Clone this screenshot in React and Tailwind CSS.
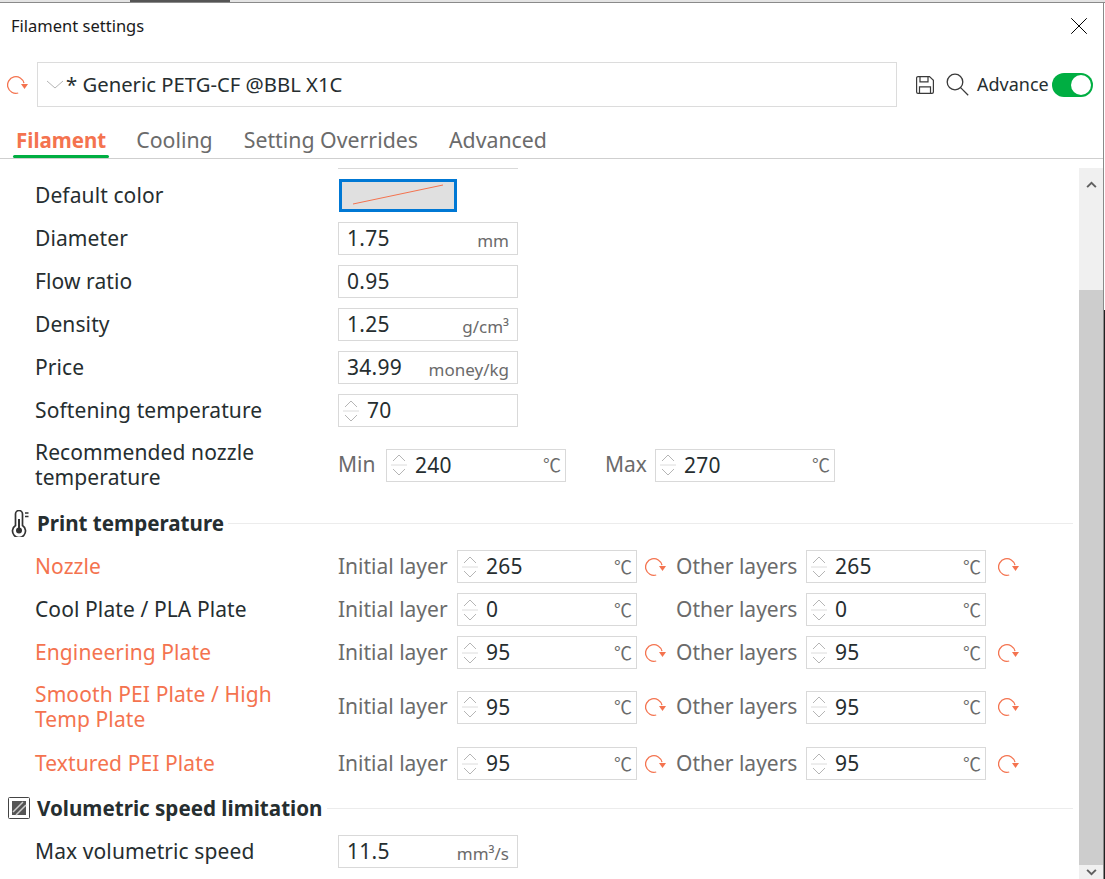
import { X } from 'lucide-react'

const FONT = "font-['Noto_Sans',sans-serif]"

function Undo({ className = '' }) {
  return (
    <svg viewBox="0 0 21 18" className={`w-[21px] h-[18px] shrink-0 ${className}`} fill="none">
      <path d="M17 7.2A8.3 8.3 0 1 0 11.2 17" stroke="#f4734f" strokeWidth="1.3" />
      <path d="M14 8h7l-3.5 5z" fill="#f4734f" />
    </svg>
  )
}

function Spin() {
  return (
    <svg viewBox="0 0 18 30" className="w-[18px] h-[30px] shrink-0" fill="none" stroke="#b5b5b5" strokeWidth="1">
      <path d="M3 11l6-6 6 6M3 19l6 6 6-6" />
      <path d="M1 15h16" stroke="#dcdcdc" />
    </svg>
  )
}

function TextBox({ value, unit, spin, w = 'w-[180px]' }) {
  const isTemp = unit === '℃'
  return (
    <div className={`${w} h-[33px] shrink-0 border border-[#d9d9d9] flex items-center pl-[3px] ${isTemp ? 'pr-[4px]' : 'pr-2'}`}>
      {spin ? <Spin /> : <span className="w-[5px]" />}
      <span className={`${spin ? 'ml-[7px]' : ''} text-[21px] text-[#262e30] leading-none tracking-[0.3px]`}>{value}</span>
      {unit && (
        <span className={`ml-auto leading-none text-[#6b6b6b] ${isTemp ? "text-[18px] pb-[2px] font-['Noto_Sans_CJK_SC',sans-serif]" : 'text-[17px] pt-1'}`}>
          {unit}
        </span>
      )}
    </div>
  )
}

function Row({ label, modified, h = 'h-[33px]', children, mb = 'mb-[10px]' }) {
  return (
    <div className={`flex items-center ${h} ${mb}`}>
      <div className={`w-[303px] shrink-0 pr-[30px] text-[21px] leading-[25px] tracking-[0.1px] ${modified ? 'text-[#f4734f]' : 'text-[#262e30]'}`}>{label}</div>
      {children}
    </div>
  )
}

function TempRow({ label, a, b, h, mb, modified = true }) {
  return (
    <Row label={label} modified={modified} h={h} mb={mb}>
      <span className="w-[119px] shrink-0 text-[21px] text-[#6b6b6b]">Initial layer</span>
      <TextBox value={a} unit="℃" spin />
      <span className="w-[39px] shrink-0 flex pl-[8px]">{modified && <Undo />}</span>
      <span className="w-[130px] shrink-0 text-[21px] text-[#6b6b6b]">Other layers</span>
      <TextBox value={b} unit="℃" spin />
      <span className="w-[43px] shrink-0 flex pl-[12px]">{modified && <Undo />}</span>
    </Row>
  )
}

function Section({ icon, title, mb }) {
  return (
    <div className={`flex items-center h-[30px] -ml-[28px] ${mb}`}>
      <span className="w-[30px] shrink-0 flex items-center">{icon}</span>
      <span className="text-[20.6px] font-bold text-[#262e30] whitespace-nowrap">{title}</span>
      <span className="flex-1 h-px bg-[#ececec] ml-1" />
    </div>
  )
}

export default function App() {
  return (
    <div className={`w-[1105px] h-[879px] overflow-hidden bg-white flex flex-col ${FONT}`}>
      {/* what shows behind the window */}
      <div className="h-[2px] shrink-0 flex">
        <div className="w-[130px] bg-[#e4e4e4]" />
        <div className="w-[100px] bg-[#555]" />
        <div className="flex-1 bg-[#e4e4e4]" />
      </div>
      <div className="h-px shrink-0 bg-[#8a8a8a]" />

      <div className="flex-1 min-h-0 flex">
        <div className="flex-1 min-w-0 bg-white flex flex-col">
          {/* Title */}
          <div className="h-[46px] shrink-0 flex items-center justify-between pl-[11px] pr-[9px]">
            <span className="text-[16.5px] text-[#1a1a1a]">Filament settings</span>
            <X className="w-[30px] h-[30px] text-black" strokeWidth={0.8} />
          </div>

          {/* Preset bar */}
          <div className="h-[45px] shrink-0 mt-[13px] flex items-center pl-[7px]">
            <Undo />
            <div className="ml-[9px] w-[860px] h-[45px] border border-[#dcdcdc] flex items-center pl-2">
              <svg viewBox="0 0 18 10" className="w-[18px] h-[10px]" fill="none" stroke="#b5b5b5"><path d="M1 1l8 7 8-7" /></svg>
              <span className="ml-[2px] text-[20.3px] text-[#262e30]">* Generic PETG-CF @BBL X1C</span>
            </div>
            <svg viewBox="0 0 18 18" className="ml-[19px] w-[18px] h-[18px]" fill="none" stroke="#3a3a3a" strokeWidth="1.2">
              <path d="M.6 2A1.4 1.4 0 0 1 2 .6h11.5l3.9 3.6V16a1.4 1.4 0 0 1-1.4 1.4H2A1.4 1.4 0 0 1 .6 16z" />
              <path d="M4 .8v5h8v-5M3.5 17v-6.2h11V17" />
            </svg>
            <svg viewBox="0 0 23 23" className="ml-[12px] w-[23px] h-[23px]" fill="none" stroke="#3a3a3a" strokeWidth="1.3">
              <circle cx="9" cy="9" r="7.8" />
              <path d="M14.6 14.6l7.6 7.6" />
            </svg>
            <span className="ml-[8px] text-[18px] text-[#262e30]">Advance</span>
            <span className="ml-[3px] w-[41px] h-[24px] rounded-full bg-[#00ae42] flex items-center justify-end pr-[2px]">
              <span className="w-[20px] h-[20px] rounded-full bg-white" />
            </span>
          </div>

          {/* Tabs */}
          <div className="h-[52px] shrink-0 border-b border-[#cfcfcf] flex items-end pl-[16px] text-[21.3px] text-[#6b6b6b]">
            <span className="relative font-bold text-[20.5px] text-[#f4734f] h-[42px] leading-[48px]">
              Filament
              <span className="absolute left-[-3px] right-[-3px] bottom-0 h-[3px] rounded-full bg-[#00ae42]" />
            </span>
            <span className="ml-[30px] h-[42px] leading-[48px]">Cooling</span>
            <span className="ml-[31px] h-[42px] leading-[48px]">Setting Overrides</span>
            <span className="ml-[31px] h-[42px] leading-[48px]">Advanced</span>
          </div>

          {/* Body */}
          <div className="flex-1 min-h-0 flex">
            <div className="flex-1 min-w-0 pl-[35px] pr-[6px] pt-[9px] overflow-hidden">
              <div className="ml-[303px] w-[180px] h-px bg-[#d9d9d9] mb-[10px]" />
              <Row label="Default color">
                <div className="ml-px w-[118px] h-[33px] border-[3px] border-[#0078d4] bg-[#e0e0e0]">
                  <svg viewBox="0 0 112 27" className="w-[112px] h-[27px]"><path d="M11 22L101 3" stroke="#f4734f" strokeWidth="1" /></svg>
                </div>
              </Row>
              <Row label="Diameter"><TextBox value="1.75" unit="mm" /></Row>
              <Row label="Flow ratio"><TextBox value="0.95" /></Row>
              <Row label="Density"><TextBox value="1.25" unit="g/cm³" /></Row>
              <Row label="Price"><TextBox value="34.99" unit="money/kg" /></Row>
              <Row label="Softening temperature"><TextBox value="70" spin /></Row>
              <Row label="Recommended nozzle temperature" h="h-[56px]" mb="mb-[15px]">
                <span className="w-[48px] shrink-0 text-[21px] text-[#6b6b6b]">Min</span>
                <TextBox value="240" unit="℃" spin />
                <span className="ml-[39px] w-[50px] shrink-0 text-[21px] text-[#6b6b6b]">Max</span>
                <TextBox value="270" unit="℃" spin />
              </Row>

              <Section
                title="Print temperature"
                mb="mb-[12px]"
                icon={
                  <svg viewBox="0 0 18 27" className="ml-[4px] w-[18px] h-[27px]" fill="none" stroke="#333" strokeWidth="1.7">
                    <path d="M4.5 4a3.5 3.5 0 0 1 7 0v11.5a6.5 6.5 0 1 1-7 0z" />
                    <circle cx="8" cy="20.5" r="3" fill="#333" stroke="none" />
                    <path d="M8 9v10" strokeWidth="2" />
                    <path d="M14 3h3.5M14 6.5h3.5" strokeWidth="1.4" />
                  </svg>
                }
              />
              <TempRow label="Nozzle" a="265" b="265" />
              <TempRow label="Cool Plate / PLA Plate" a="0" b="0" modified={false} />
              <TempRow label="Engineering Plate" a="95" b="95" />
              <TempRow label="Smooth PEI Plate / High Temp Plate" a="95" b="95" h="h-[56px]" mb="mb-[12px]" />
              <TempRow label="Textured PEI Plate" a="95" b="95" mb="mb-[13px]" />

              <Section
                title="Volumetric speed limitation"
                mb="mb-[12px]"
                icon={
                  <svg viewBox="0 0 22 22" className="ml-[1px] w-[22px] h-[22px]">
                    <rect x="0.5" y="0.5" width="21" height="21" rx="1" fill="#fff" stroke="#444" />
                    <rect x="4" y="4" width="14" height="14" fill="#555" />
                    <path d="M5 15L15 5M8 18L18 8" stroke="#ccc" strokeWidth="1.5" />
                  </svg>
                }
              />
              <Row label="Max volumetric speed"><TextBox value="11.5" unit="mm³/s" /></Row>
            </div>

            {/* Scrollbar */}
            <div className="w-[24px] shrink-0 mt-[9px] flex flex-col">
              <div className="h-[32px] bg-[#f0f0f0] flex items-center justify-center">
                <svg viewBox="0 0 12 8" className="w-[11px] h-[7px]" fill="none" stroke="#606060" strokeWidth="2.2"><path d="M1 7l5-5 5 5" /></svg>
              </div>
              <div className="h-[90px] bg-[#f0f0f0]" />
              <div className="flex-1 bg-[#cdcdcd]" />
              <div className="h-[14px] bg-[#f0f0f0] flex items-center justify-center">
                <svg viewBox="0 0 12 8" className="w-[11px] h-[7px]" fill="none" stroke="#606060" strokeWidth="2.2"><path d="M1 1l5 5 5-5" /></svg>
              </div>
            </div>
          </div>
        </div>

        {/* window edge, then the desktop behind it */}
        <div className="w-px shrink-0 bg-[#8a8a8a]" />
        <div className="w-px shrink-0 flex flex-col">
          <div className="h-[307px] bg-white" />
          <div className="flex-1 bg-[#222]" />
        </div>
      </div>
    </div>
  )
}
